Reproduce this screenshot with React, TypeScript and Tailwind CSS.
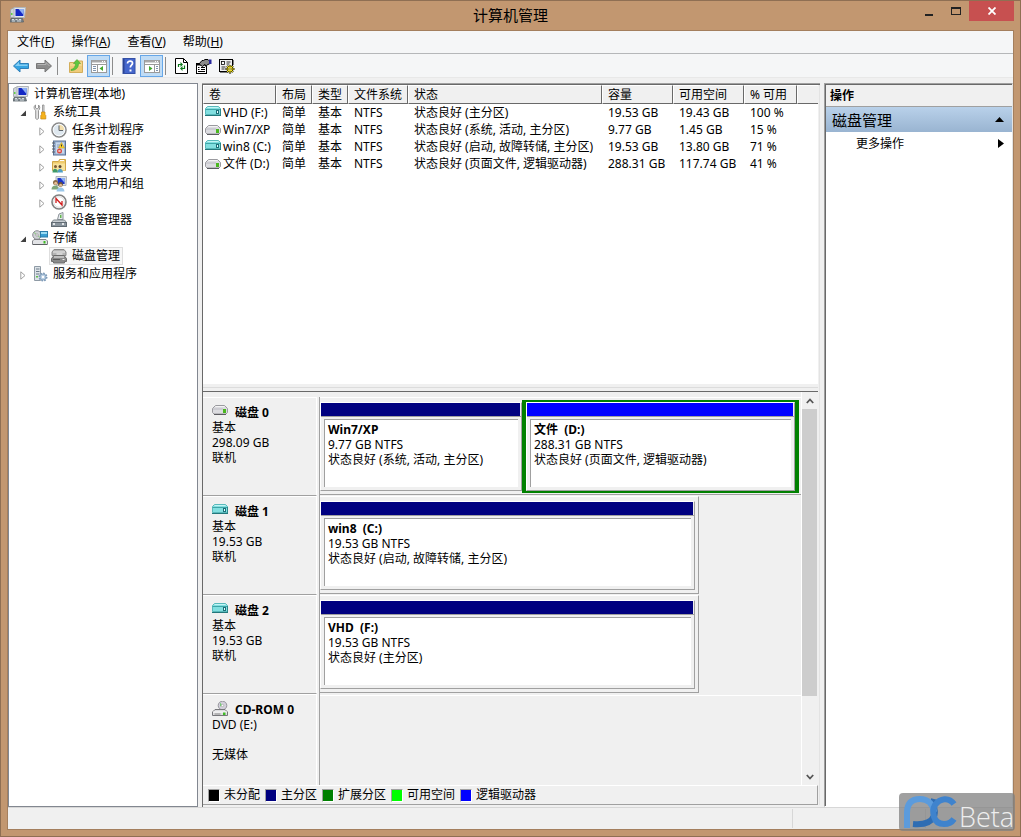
import React from 'react';
import clsx from 'clsx';

type DiskKind = 'teal' | 'gray' | 'cd';

const menus = [
  { label: '文件', key: 'F' },
  { label: '操作', key: 'A' },
  { label: '查看', key: 'V' },
  { label: '帮助', key: 'H' },
];

const volumes: { kind: DiskKind; cells: string[] }[] = [
  { kind: 'teal', cells: ['VHD (F:)', '简单', '基本', 'NTFS', '状态良好 (主分区)', '19.53 GB', '19.43 GB', '100 %'] },
  { kind: 'gray', cells: ['Win7/XP', '简单', '基本', 'NTFS', '状态良好 (系统, 活动, 主分区)', '9.77 GB', '1.45 GB', '15 %'] },
  { kind: 'teal', cells: ['win8 (C:)', '简单', '基本', 'NTFS', '状态良好 (启动, 故障转储, 主分区)', '19.53 GB', '13.80 GB', '71 %'] },
  { kind: 'gray', cells: ['文件 (D:)', '简单', '基本', 'NTFS', '状态良好 (页面文件, 逻辑驱动器)', '288.31 GB', '117.74 GB', '41 %'] },
];

const columns = [
  { title: '卷', width: 'w-[73px]' },
  { title: '布局', width: 'w-[36px]' },
  { title: '类型', width: 'w-[36px]' },
  { title: '文件系统', width: 'w-[60px]' },
  { title: '状态', width: 'w-[194px]' },
  { title: '容量', width: 'w-[71px]' },
  { title: '可用空间', width: 'w-[71px]' },
  { title: '% 可用', width: 'w-[53px]' },
];

const legend = [
  { name: '未分配', color: 'bg-black' },
  { name: '主分区', color: 'bg-[#000080]' },
  { name: '扩展分区', color: 'bg-[#008000]' },
  { name: '可用空间', color: 'bg-[#00ff00]' },
  { name: '逻辑驱动器', color: 'bg-[#0000ff]' },
];

/* ---------- icons ---------- */

const Svg = ({ children, w = 16, h = 16 }: { children: React.ReactNode; w?: number; h?: number }) => (
  <svg width={w} height={h} viewBox={`0 0 ${w} ${h}`} className="block shrink-0" aria-hidden="true">
    {children}
  </svg>
);

const ComputerIcon = () => (
  <Svg>
    <path d="M.5 2.500l3-1.500h2v9.500h-5z" fill="#cfd4d8" stroke="#9aa1a6" strokeWidth="0.8" />
    <rect x="1" y="6" width="1.500" height="2" fill="#62cf48" />
    <path d="M4 .5h11.500l-1 10H4z" fill="#e3e6ea" stroke="#b0b5ba" />
    <path d="M5.500 2h8.500l-.7 7H5.500z" fill="#1428c4" />
    <path d="M8.500 2H14l-.5 6z" fill="#8fb0f2" />
    <path d="M7 10.500h4v1.500H7z" fill="#a5abb0" />
    <path d="M1 11.500h11.500l1 3.500H0z" fill="#7c868d" stroke="#596268" strokeWidth="0.8" />
    <path d="M2 12.500h2M5.500 12.500h2M9 12.500h2M2 14h3M7 14h4" stroke="#e3e9ed" strokeWidth="0.9" />
  </Svg>
);

const ToolsIcon = () => (
  <Svg>
    <path d="M3.500 1v3l1.500 1L6.500 4V1C8 2 8.300 5 6.500 6.500V14.500c-.6 1-2.200 1-2.800 0V6.500C1.700 5 1.500 2 3.500 1z" fill="#e4e4e4" stroke="#8b8b8b" strokeWidth="0.9" />
    <path d="M10.500 1h1.500v7h-1.500z" fill="#e0e0e0" stroke="#8a8a8a" strokeWidth="0.8" />
    <path d="M9.500 8h3.500v2.500l.8 1v3.500h-5v-3.500l.7-1z" fill="#f5b21c" stroke="#c98a14" strokeWidth="0.7" />
  </Svg>
);

const ClockIcon = () => (
  <Svg>
    <circle cx="8" cy="8" r="7" fill="#dfe8ef" stroke="#8a8a8a" strokeWidth="1.600" />
    <path d="M8 8V2.500A5.500 5.500 0 0 1 13.500 8z" fill="#f3dfae" />
    <circle cx="8" cy="8" r="5.800" fill="none" stroke="#fff" strokeWidth="0.8" />
    <path d="M8 3.500V8.500h4" fill="none" stroke="#5f666c" />
  </Svg>
);

const EventIcon = () => (
  <Svg>
    <rect x="2.500" y="1" width="12" height="14" fill="#9db4d4" stroke="#5c7397" />
    <rect x="5" y="2.500" width="8" height="11" fill="#c9d8ec" />
    <path d="M1 3h3M1 6h3M1 9h3M1 12h3" stroke="#5a5f67" />
    <path d="M6 5h3M6 7h2" stroke="#7f93b0" strokeWidth="0.8" />
    <path d="M10.500 2.500l3 5.500h-6z" fill="#ffd72e" stroke="#c49e18" strokeWidth="0.6" />
    <path d="M10.500 4.500v2" stroke="#333" />
    <circle cx="8.500" cy="11" r="2.500" fill="#dc4a42" />
    <path d="M7.500 10l2 2m0-2l-2 2" stroke="#fff" strokeWidth="0.8" />
  </Svg>
);

const SharedFolderIcon = () => (
  <Svg>
    <path d="M1.500 3.500h6l1-2h6v11h-13z" fill="#efcb6c" stroke="#d0a748" />
    <path d="M2 5.500h12v7H2z" fill="#f8e29b" />
    <path d="M9 2.500h4" stroke="#fff" />
    <circle cx="4.500" cy="8.500" r="1.500" fill="#7d5a33" />
    <circle cx="9" cy="8.500" r="1.500" fill="#5f4630" />
    <path d="M1.500 14.500c0-5 5-5 5.500 0z" fill="#3f9a68" />
    <path d="M6.500 14.500c0-5 5-5 5.500 0z" fill="#4f9fc4" />
  </Svg>
);

const UsersIcon = () => (
  <Svg>
    <path d="M5 .5h10.500l-.5 9H5z" fill="#dde2e7" stroke="#adb3b9" />
    <path d="M6.500 2H14l-.4 6H6.500z" fill="#1d34c8" />
    <path d="M9.500 2H14l-.3 5z" fill="#8fb0f2" />
    <circle cx="4.500" cy="6.500" r="2.500" fill="#8a6a45" />
    <circle cx="4.700" cy="7.200" r="1.500" fill="#e6bd95" />
    <path d="M.5 13.500c0-5.500 7.500-5.500 7.500 0z" fill="#7fa578" />
    <circle cx="9.500" cy="8.500" r="2.400" fill="#6d5538" />
    <circle cx="9.600" cy="9.200" r="1.500" fill="#e2b88f" />
    <path d="M5.500 15.500c0-5.500 8-5.500 8 0z" fill="#9cc8ea" />
  </Svg>
);

const PerformanceIcon = () => (
  <Svg>
    <circle cx="8" cy="8" r="7" fill="#fff" stroke="#808080" strokeWidth="1.600" />
    <circle cx="8" cy="8" r="5.300" fill="none" stroke="#d4d4d6" strokeWidth="0.8" />
    <path d="M5 9V4.500l6 6.500V7" fill="none" stroke="#d01c1c" strokeWidth="1.300" />
  </Svg>
);

const DeviceIcon = () => (
  <Svg>
    <path d="M6.500 7.500L8 2l4-1.500v7z" fill="#e8ecef" stroke="#8b9298" />
    <path d="M9 3l1.500-.5v3.500H9z" fill="#62b64c" />
    <path d="M2.500 8h11l2 2.500H.5z" fill="#c8ced3" stroke="#7f878d" />
    <rect x="0.500" y="10.500" width="15" height="4" fill="#8a959e" stroke="#616b73" />
    <path d="M3 11v2M12 11v2" stroke="#fff" strokeWidth="1.500" />
  </Svg>
);

const StorageIcon = () => (
  <Svg>
    <circle cx="5" cy="5" r="4.300" fill="#cfd1d5" stroke="#8d8f94" />
    <path d="M5 5L2 2.500M5 5l3 2.500" stroke="#86cc78" />
    <circle cx="5" cy="5" r="1.200" fill="#fff" stroke="#808080" strokeWidth="0.600" />
    <rect x="8.500" y="1.500" width="7" height="5.500" fill="#3a9fd2" stroke="#2b7daa" />
    <path d="M9 2h6v2H9z" fill="#9bdcf3" />
    <path d="M2 9.500h12l1.500 1.500v3.500H.5V11z" fill="#e2e3e6" stroke="#828489" />
    <path d="M1 14.500h14" stroke="#5d5f63" />
    <rect x="11.500" y="11" width="2" height="2.500" fill="#3fbb26" />
  </Svg>
);

const DiskManagementIcon = () => (
  <Svg>
    <path d="M3 1.500h10l2 2.500v3.500H1V4z" fill="#b5b5b5" stroke="#8a8a8a" />
    <path d="M2 4h12" stroke="#ececec" />
    <path d="M3 7.500h10l2.500 3v3h-2v1.500h-11v-1.500h-2v-3z" fill="#8a8a8a" stroke="#6c6c6c" />
    <path d="M5.500 6h6M3 9h10" stroke="#f4f4f4" />
    <path d="M2 11.500h7" stroke="#5a5a5a" />
    <rect x="11.500" y="11" width="2" height="1" fill="#eee" />
  </Svg>
);

const ServicesIcon = () => (
  <Svg>
    <path d="M2.500.5h6v14h-6z" fill="#dde3e8" stroke="#8e9aa5" />
    <path d="M4 3h3.500M4 5.500h3.500M4 8h3.500" stroke="#6d7c8a" />
    <rect x="4" y="10" width="2" height="1.500" fill="#62bd4c" />
    <circle cx="11" cy="11" r="3.500" fill="#c6d8ea" stroke="#7d9ab8" strokeWidth="2" strokeDasharray="1.600 1.100" />
    <circle cx="11" cy="11" r="3" fill="#b7cde2" stroke="#7d9ab8" strokeWidth="0.700" />
    <circle cx="11" cy="11" r="1.200" fill="#fff" />
  </Svg>
);

const DiskIcon = ({ kind }: { kind: DiskKind }) => {
  if (kind === 'cd') {
    return (
      <Svg>
        <circle cx="10.500" cy="4.500" r="4.300" fill="#d4d0dc" stroke="#8d8d93" strokeWidth="0.900" />
        <path d="M10.500 4.500L8 1.500v4z" fill="#74ce74" />
        <circle cx="10.500" cy="4.500" r="1.200" fill="#fff" stroke="#888" strokeWidth="0.500" />
        <path d="M3 8.500h10l2.500 2.500v3.500H.5V11z" fill="#dedee0" stroke="#77777b" />
        <path d="M1 11h14" stroke="#fff" />
        <rect x="11" y="11.500" width="2.500" height="2.500" fill="#3fbb26" />
        <path d="M2.500 13h6" stroke="#8a8a8a" />
      </Svg>
    );
  }
  if (kind === 'teal') {
    return (
      <Svg h={10}>
        <path d="M2.500.5h11l2 2v6h-15v-6z" fill="#82dfe0" stroke="#58b9bb" />
        <path d="M2.500 1.500h11" stroke="#c4f5f5" />
        <path d="M.5 3.500h15" stroke="#3fa5a8" />
        <path d="M0 9.500h16" stroke="#23777b" />
        <path d="M15.500 3v6" stroke="#2b878b" />
        <rect x="11.500" y="4.500" width="2" height="3" fill="#eaffff" stroke="#1c6f78" />
      </Svg>
    );
  }
  return (
    <Svg h={10}>
      <path d="M3.500.5h9l3 3v4l-1.500 1.500h-12l-1.500-1.500v-4z" fill="#dcdce0" stroke="#9a9a9f" />
      <path d="M3.500 1.500h9" stroke="#f4f4f4" />
      <path d="M1 4h10" stroke="#bcbcc3" />
      <path d="M2 9.500h12" stroke="#5c5c61" />
      <rect x="11" y="4" width="3" height="4" fill="#4ab81f" />
    </Svg>
  );
};

const ArrowIcon = ({ forward = false }: { forward?: boolean }) => (
  <Svg>
    {forward ? (
      <>
        <path d="M15.500 8L9 2v3.500H.5v5H9V14z" fill="#8c8c8c" stroke="#777" />
        <path d="M1.500 6.500H10V4.500L13.500 8" fill="none" stroke="#b5b5b5" />
      </>
    ) : (
      <>
        <path d="M.5 8L7 2v3.500h8.500v5H7V14z" fill="#35a4e2" stroke="#2f7fb8" />
        <path d="M2 8l4-4v2.500h8.500V8z" fill="#84cdf3" />
      </>
    )}
  </Svg>
);

const FolderUpIcon = () => (
  <Svg>
    <path d="M1.500 4.500h5l1-1.500h7v11.500h-13z" fill="#f4d78c" stroke="#d3ae5b" />
    <path d="M2 8h12v6H2z" fill="#efcb7a" />
    <path d="M3 11.500c3-.5 4.500-3 4.500-6H5.500L9 1.500l3.500 4h-2c0 4-2.500 7-7.500 7z" fill="#5ec83f" stroke="#48a52f" strokeWidth="0.600" />
  </Svg>
);

const PaneIcon = ({ right = false }: { right?: boolean }) => (
  <Svg>
    <rect x="0.500" y="2.500" width="15" height="12" fill="#fff" stroke="#9a9a9a" />
    <path d="M1 3.500h14" stroke="#a9a9a9" strokeWidth="2" />
    <path d="M11 3.500h1M13 3.500h1" stroke="#fff" />
    <path d="M1 6.500h14" stroke="#9a9a9a" />
    {right ? (
      <>
        <path d="M10.500 7v7" stroke="#9a9a9a" />
        <path d="M12 8.500h2M12 10.500h2M12 12.500h2" stroke="#7f93ad" />
        <path d="M5 8l3.500 2.500L5 13z" fill="#43a82c" />
      </>
    ) : (
      <>
        <path d="M6.500 7v7" stroke="#9a9a9a" />
        <path d="M2 8.500h3M2 10.500h3M2 12.500h3" stroke="#7f93ad" />
        <path d="M12 8l-3.500 2.500L12 13z" fill="#43a82c" />
      </>
    )}
  </Svg>
);

const HelpIcon = () => (
  <Svg>
    <rect x="2" y="0.500" width="12" height="15" fill="#4466cc" stroke="#3450a6" />
    <path d="M2 1h1.500v14H2z" fill="#2c4492" />
    <path d="M6.500 5.500c0-3.500 5.500-3 5 0-.3 1.700-2.200 1.700-2.200 4" fill="none" stroke="#fff" strokeWidth="1.700" />
    <rect x="8.500" y="11.500" width="2" height="2" fill="#fff" />
  </Svg>
);

const RefreshIcon = () => (
  <Svg>
    <path d="M2.500.5h8l4 4v11h-12z" fill="#fff" stroke="#000" />
    <path d="M10.500.5v4h4" fill="none" stroke="#000" />
    <path d="M5.500 9V6.500h3M11.500 7.500v3h-3" fill="none" stroke="#0c7a1c" strokeWidth="1.200" />
    <path d="M7.500 4L10 6.500 7.500 9zM9.500 8L7 10.500 9.500 13z" fill="#0c7a1c" />
  </Svg>
);

const PropertiesIcon = () => (
  <Svg>
    <rect x="0.500" y="5.500" width="10" height="10" fill="#fff" stroke="#000" />
    <path d="M1 6.500h9" stroke="#000" strokeWidth="2" />
    <path d="M2 9.500h1.500M5 9.500h4M2 11.500h1.500M5 11.500h4M2 13.500h7" stroke="#000" />
    <path d="M3 6l3-3.500h1.500L9 1.500h3l1.500 1.500v3l-2 .5-1.500 2-1-2-2.500 2z" fill="#8a8a8a" stroke="#000" />
    <path d="M13 1.500h2.500V6H13z" fill="#27279c" />
  </Svg>
);

const SettingsIcon = () => (
  <Svg>
    <rect x="0.500" y="1.500" width="13" height="12" fill="#f0f0f0" stroke="#000" />
    <path d="M1 14.500h8M14.500 2v5" fill="none" stroke="#808080" />
    <rect x="2.500" y="3.500" width="3" height="3" fill="#fff" stroke="#000" strokeWidth="0.800" />
    <path d="M7.500 4h4M7.500 6h3M2.500 9h4M2.500 11h3" stroke="#333" />
    <path d="M11 7v8.500M6.500 11h9M8 8l6 6M14 8l-6 6" stroke="#000" strokeWidth="2.200" />
    <path d="M11 7v8M7 11h8.500M8.200 8.200l5.600 5.600M13.800 8.200l-5.600 5.600" stroke="#ffee2b" strokeWidth="1.200" />
    <circle cx="11" cy="11" r="1" fill="#fff" stroke="#6a6000" strokeWidth="0.600" />
  </Svg>
);

const Logo = () => (
  <svg width="54" height="34" viewBox="0 0 54 34" className="shrink-0" aria-hidden="true">
    <path d="M31 4C29 12 34 16 31 21c-3 7-10 9-21 8" fill="none" stroke="#2f6db3" strokeWidth="6" />
    <path d="M4 33V18C4 8 9 4 17 4c9 0 13 6 14 13" fill="none" stroke="#5b9bdc" strokeWidth="6" />
    <path d="M51 9C46 2 37 3 32 10c-3 5-3 19 9 19 5 0 8-2 10-5" fill="none" stroke="#3f83cd" strokeWidth="6" />
  </svg>
);

/* ---------- window parts ---------- */

const TitleBar = () => (
  <header className="grid h-[29px] grid-cols-[1fr_auto_1fr] items-start">
    <div className="pt-[6px] pl-[3px]">
      <ComputerIcon />
    </div>
    <h1 className="pt-1 text-[15px] leading-[20px]">计算机管理</h1>
    <div className="flex justify-end">
      <button aria-label="最小化" className="flex h-[19px] w-[27px] items-end justify-center pb-1">
        <span className="h-[2px] w-2 bg-[#222]" />
      </button>
      <button aria-label="最大化" className="flex h-[20px] w-[27px] items-center justify-center">
        <span className="h-2 w-[10px] border border-t-2 border-[#222]" />
      </button>
      <button aria-label="关闭" className="flex h-[20px] w-[45px] items-center justify-center bg-[#c75050]">
        <svg width="8" height="8" viewBox="0 0 8 8">
          <path d="M.5.5l7 7M7.500.5l-7 7" stroke="#fff" strokeWidth="1.800" />
        </svg>
      </button>
    </div>
  </header>
);

const Separator = () => <span className="mr-[3px] ml-[2px] h-[18px] w-px bg-[#8c8c8c]" />;

const ToolButton = ({ label, active = false, children }: { label: string; active?: boolean; children: React.ReactNode }) => (
  <button
    aria-label={label}
    className={clsx(
      'flex h-[22px] w-[23px] items-center justify-center border',
      active ? 'border-[#66a7e8] bg-[#c0dcf5]' : 'border-transparent'
    )}
  >
    {children}
  </button>
);

const ToolBar = () => (
  <div className="flex h-[24px] items-center border-b border-[#e8e8e8] bg-[#f5f6f7] pt-px pl-px">
    <ToolButton label="后退"><ArrowIcon /></ToolButton>
    <ToolButton label="前进"><ArrowIcon forward /></ToolButton>
    <Separator />
    <span className="w-[3px]" />
    <ToolButton label="向上"><FolderUpIcon /></ToolButton>
    <ToolButton label="显示控制台树" active><PaneIcon /></ToolButton>
    <Separator />
    <span className="w-px" />
    <ToolButton label="帮助"><HelpIcon /></ToolButton>
    <ToolButton label="显示操作窗格" active><PaneIcon right /></ToolButton>
    <Separator />
    <ToolButton label="刷新"><RefreshIcon /></ToolButton>
    <ToolButton label="属性"><PropertiesIcon /></ToolButton>
    <ToolButton label="设置"><SettingsIcon /></ToolButton>
  </div>
);

type TreeRowProps = {
  level: 0 | 1 | 2;
  label: string;
  icon: React.ReactNode;
  state?: 'open' | 'closed';
  selected?: boolean;
};

const TreeRow = ({ level, label, icon, state, selected = false }: TreeRowProps) => (
  <li className={clsx('flex h-[18px] items-center', level === 0 && 'pl-[2px]', level === 1 && 'pl-[7px]', level === 2 && 'pl-[26px]')}>
    {level > 0 && (
      <span className="flex w-[14px] justify-center pt-[2px]">
        {state === 'open' && (
          <svg width="7" height="7" viewBox="0 0 7 7"><path d="M6 .5V6H.5z" fill="#404040" /></svg>
        )}
        {state === 'closed' && (
          <svg width="6" height="9" viewBox="0 0 6 9"><path d="M.8.8v7.400L5 4.500z" fill="#fff" stroke="#a0a0a0" /></svg>
        )}
      </span>
    )}
    <button
      className={clsx(
        'flex h-[18px] items-center gap-[5px] border pr-[2px] pl-px whitespace-nowrap',
        selected ? 'border-[#dedede] bg-[#f7f7f7]' : 'border-transparent'
      )}
    >
      {icon}
      <span>{label}</span>
    </button>
  </li>
);

const Tree = () => (
  <nav className="w-[190px] shrink-0 border border-[#828790] bg-white pt-px">
    <ul>
      <TreeRow level={0} label="计算机管理(本地)" icon={<ComputerIcon />} />
      <TreeRow level={1} label="系统工具" state="open" icon={<ToolsIcon />} />
      <TreeRow level={2} label="任务计划程序" state="closed" icon={<ClockIcon />} />
      <TreeRow level={2} label="事件查看器" state="closed" icon={<EventIcon />} />
      <TreeRow level={2} label="共享文件夹" state="closed" icon={<SharedFolderIcon />} />
      <TreeRow level={2} label="本地用户和组" state="closed" icon={<UsersIcon />} />
      <TreeRow level={2} label="性能" state="closed" icon={<PerformanceIcon />} />
      <TreeRow level={2} label="设备管理器" icon={<DeviceIcon />} />
      <TreeRow level={1} label="存储" state="open" icon={<StorageIcon />} />
      <TreeRow level={2} label="磁盘管理" selected icon={<DiskManagementIcon />} />
      <TreeRow level={1} label="服务和应用程序" state="closed" icon={<ServicesIcon />} />
    </ul>
  </nav>
);

const VolumeTable = () => (
  <div className="flex-1 bg-white">
    <table className="w-full table-fixed border-separate border-spacing-0 text-left whitespace-nowrap">
      <thead>
        <tr className="h-[19px] bg-[#f0f0f0]">
          {columns.map((c) => (
            <th
              key={c.title}
              className={clsx(c.width, 'border-t border-r border-b border-l border-t-white border-r-[#696969] border-b-[#696969] border-l-white p-0 pl-[5px] leading-[17px] font-normal')}
            >
              {c.title}
            </th>
          ))}
          <th className="border-t border-b border-l border-t-white border-b-[#696969] border-l-white p-0" />
        </tr>
      </thead>
      <tbody>
        {volumes.map((v) => (
          <tr key={v.cells[0]} className="h-[17px]">
            {v.cells.map((text, i) =>
              i === 0 ? (
                <td key={i} className="p-0 pl-[2px] leading-[17px]">
                  <span className="flex gap-[2px]">
                    <span className={v.kind === 'teal' ? 'pt-[2px]' : 'pt-1'}><DiskIcon kind={v.kind} /></span>
                    {text}
                  </span>
                </td>
              ) : (
                <td key={i} className="p-0 pl-[6px] leading-[17px]">{text}</td>
              )
            )}
            <td />
          </tr>
        ))}
      </tbody>
    </table>
  </div>
);

type PartitionProps = { name: string; size: string; status: string; className: string; logical?: boolean };

const Partition = ({ name, size, status, className, logical = false }: PartitionProps) => (
  <div className={clsx('border-y-2', className, logical ? 'border-x-4 border-[#008000]' : 'border-transparent')}>
    <div className="flex h-[89px] flex-col border border-t-white border-r-[#a0a0a0] border-b-[#a0a0a0] border-l-white bg-[#f0f0f0]">
      <div className={clsx('mr-px h-[13px]', logical ? 'bg-[#0000ff]' : 'bg-[#000080]')} />
      <div className="h-[3px] border-t border-[#a0a0a0]" />
      <div className="mr-[3px] mb-[3px] ml-[3px] flex-1 border-t border-l border-[#a0a0a0] bg-white pt-[2px] pl-[3px] leading-[15px] whitespace-pre">
        <p className="font-bold">{name}</p>
        <p>{size}</p>
        <p>{status}</p>
      </div>
    </div>
  </div>
);

type DiskRowProps = { kind: DiskKind; title: string; lines: string[]; last?: boolean; children?: React.ReactNode };

const DiskRow = ({ kind, title, lines, last = false, children }: DiskRowProps) => (
  <section className={clsx('flex', last ? 'h-[91px]' : 'h-[99px]')}>
    <div
      className={clsx(
        'mr-[2px] w-[114px] shrink-0 border-t border-r border-white pt-[7px] pl-[9px] leading-[15px]',
        !last && 'border-b border-b-[#a0a0a0]'
      )}
    >
      <h2 className={clsx('flex h-[15px] gap-[7px] font-bold', last && 'items-end')}>
        <DiskIcon kind={kind} />
        {title}
      </h2>
      {lines.map((line, i) => (
        <p key={i} className="h-[15px]">{line}</p>
      ))}
    </div>
    <div className="min-w-0 flex-1 border-l border-[#a0a0a0]">{children ?? <div className="mt-px h-px bg-white" />}</div>
  </section>
);

const ScrollBar = () => (
  <div className="flex w-[17px] shrink-0 flex-col border-l border-white bg-[#f0f0f0] pr-px">
    <button aria-label="向上滚动" className="flex h-[17px] items-center justify-center">
      <svg width="8" height="6" viewBox="0 0 8 6"><path d="M.8 5L4 1.500 7.200 5" fill="none" stroke="#555" strokeWidth="1.800" /></svg>
    </button>
    <div className="h-[287px] bg-[#cdcdcd]" />
    <div className="flex-1" />
    <button aria-label="向下滚动" className="flex h-[17px] items-center justify-center">
      <svg width="8" height="6" viewBox="0 0 8 6"><path d="M.8 1L4 4.500 7.200 1" fill="none" stroke="#555" strokeWidth="1.800" /></svg>
    </button>
  </div>
);

const DiskGraph = () => (
  <div className="flex">
    <div className="min-w-0 flex-1 pt-[5px]">
      <DiskRow kind="gray" title="磁盘 0" lines={['基本', '298.09 GB', '联机']}>
        <div className="flex border-t border-b border-t-white border-b-[#a0a0a0] pt-[2px] pr-[2px] pb-px">
          <Partition className="w-[202px] shrink-0" name="Win7/XP" size="9.77 GB NTFS" status="状态良好 (系统, 活动, 主分区)" />
          <Partition className="flex-1" logical name="文件  (D:)" size="288.31 GB NTFS" status="状态良好 (页面文件, 逻辑驱动器)" />
        </div>
      </DiskRow>
      <DiskRow kind="teal" title="磁盘 1" lines={['基本', '19.53 GB', '联机']}>
        <div className="w-[379px] border-t border-r border-b border-t-white border-r-[#a0a0a0] border-b-[#a0a0a0] pt-[2px] pr-[3px] pb-px">
          <Partition className="w-full" name="win8  (C:)" size="19.53 GB NTFS" status="状态良好 (启动, 故障转储, 主分区)" />
        </div>
      </DiskRow>
      <DiskRow kind="teal" title="磁盘 2" lines={['基本', '19.53 GB', '联机']}>
        <div className="w-[379px] border-t border-r border-b border-t-white border-r-[#a0a0a0] border-b-[#a0a0a0] pt-[2px] pr-[3px] pb-px">
          <Partition className="w-full" name="VHD  (F:)" size="19.53 GB NTFS" status="状态良好 (主分区)" />
        </div>
      </DiskRow>
      <DiskRow kind="cd" title="CD-ROM 0" lines={['DVD (E:)', '', '无媒体']} last />
    </div>
    <ScrollBar />
  </div>
);

const Legend = () => (
  <div className="flex h-[20px] items-center gap-[5px] border-t border-r border-b border-t-white border-r-[#a0a0a0] border-b-[#a0a0a0] pl-[5px]">
    {legend.map((l) => (
      <span key={l.name} className="flex items-center gap-1 whitespace-nowrap">
        <span className={clsx('h-[13px] w-[12px] border border-t-[#a0a0a0] border-r-white border-b-white border-l-[#a0a0a0]', l.color)} />
        {l.name}
      </span>
    ))}
  </div>
);

const ActionsPane = () => (
  <aside className="w-[189px] shrink-0 border-t border-r border-b border-l border-t-[#a0a0a0] border-r-[#e3e3e3] border-b-white border-l-[#a0a0a0]">
    <div className="h-full border-t border-l border-[#696969] bg-white">
      <h2 className="h-[22px] border-b border-[#a0a0a0] bg-[#f0f0f0] pl-1 leading-[22px] font-bold">操作</h2>
      <button className="flex h-[25px] w-full items-center justify-between bg-linear-to-b from-[#b9d1ea] to-[#99b4d1] pr-2 pl-[6px] text-[15px]">
        磁盘管理
        <svg width="9" height="5" viewBox="0 0 9 5"><path d="M4.500 0L9 5H0z" /></svg>
      </button>
      <button className="flex h-[23px] w-full items-center justify-between pr-2 pl-[30px]">
        更多操作
        <svg width="6" height="9" viewBox="0 0 6 9"><path d="M0 0l6 4.500L0 9z" /></svg>
      </button>
    </div>
  </aside>
);

const App = () => (
  <div className="relative flex min-h-screen flex-col border border-[#8f6f53] bg-[#c29770] px-[6px] pb-[6px] font-['Noto_Sans','Noto_Sans_CJK_SC',sans-serif] text-[12px] leading-[16px] text-black">
    <TitleBar />
    <div className="flex flex-1 flex-col border border-[#a47f5e] bg-[#f0f0f0]">
      <div className="flex h-[23px] items-center gap-px border-b border-[#b5b7b9] bg-[#f5f6f7] pl-px">
        {menus.map((m) => (
          <button key={m.key} className="px-2">
            {m.label}(<span className="underline">{m.key}</span>)
          </button>
        ))}
      </div>
      <ToolBar />
      <div className="flex flex-1 gap-1 pt-[5px]">
        <Tree />
        <main className="flex min-w-0 flex-1 flex-col border-t border-[#a0a0a0]">
          <div className="flex flex-1 flex-col border-t border-l border-[#696969] pb-[2px]">
            <div className="flex flex-1 flex-col border-r border-[#e3e3e3] pr-px">
              <VolumeTable />
              <div className="flex h-2 flex-col justify-center border-b border-[#696969]">
                <div className="h-px bg-[#dcdcdc]" />
              </div>
              <DiskGraph />
              <Legend />
            </div>
          </div>
        </main>
        <ActionsPane />
      </div>
      <footer className="flex h-[22px] justify-end border-t border-[#d7d7d7] py-px">
        <div className="w-[133px] border-l border-[#d7d7d7]" />
        <div className="w-[88px] border-l border-[#d7d7d7]" />
      </footer>
    </div>
    {/* Watermark badge */}
    <div className="absolute right-[5px] bottom-[5px] flex h-[38px] w-[116px] items-center gap-[2px] rounded-[4px] bg-[#808080]/75 pl-1">
      <Logo />
      <span className="pt-2 font-['Open_Sans',sans-serif] text-[27px] leading-none font-light text-[#eee]">Beta</span>
    </div>
  </div>
);

export default App;
